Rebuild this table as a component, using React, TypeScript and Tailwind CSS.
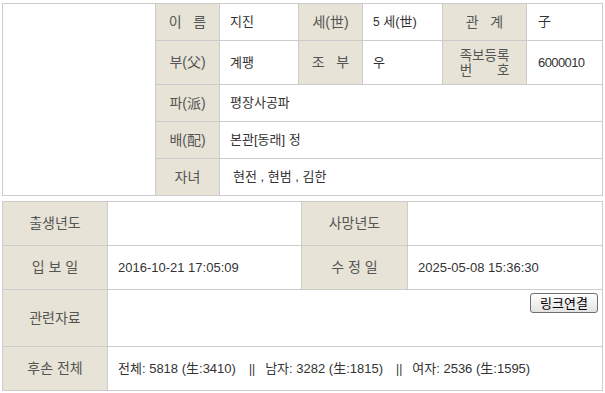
import React from 'react'

const font = 'font-["Liberation_Sans","Noto_Sans_CJK_KR",sans-serif]'

function Label({ children, className = '' }: { children: React.ReactNode; className?: string }) {
  return (
    <div
      className={`flex items-center justify-center whitespace-pre bg-[#e7e3d6] text-[14px] text-[#555] ${className}`}
    >
      {children}
    </div>
  )
}

function Value({ children, className = '' }: { children?: React.ReactNode; className?: string }) {
  return (
    <div className={`flex items-center whitespace-pre bg-white pl-[10px] text-[13px] text-[#333] ${className}`}>
      {children}
    </div>
  )
}

function Sep() {
  return <span className="mx-[10px] text-[12px]">||</span>
}

export default function App() {
  return (
    <div className={`h-[393px] w-[605px] overflow-hidden bg-white ${font}`}>
      {/* 인물 기본 정보 */}
      <div className="ml-[2px] mt-[3px] grid w-[601px] grid-cols-[152px_63px_78px_63px_79px_83px_75px] grid-rows-[36px_43px_36px_36px_36px] gap-px border border-[#cccccc] bg-[#cccccc]">
        <div className="row-span-5 bg-white" />

        <Label>{'이   름'}</Label>
        <Value>지진</Value>
        <Label>세(世)</Label>
        <Value>
          <span className="text-[12px]">5</span> 세(世)
        </Value>
        <Label>{'관   계'}</Label>
        <Value className="pl-[11px]">子</Value>

        <Label>부(父)</Label>
        <Value>계팽</Value>
        <Label>{'조   부'}</Label>
        <Value>우</Value>
        <Label>
          <div className="flex flex-col text-[13.5px] leading-[15px]">
            <span>족보등록</span>
            <span className="flex justify-between">
              <span>번</span>
              <span>호</span>
            </span>
          </div>
        </Label>
        <Value className="pl-[11px] text-[12px] tracking-[-0.6px]">6000010</Value>

        <Label>파(派)</Label>
        <Value className="col-span-5">평장사공파</Value>

        <Label>배(配)</Label>
        <Value className="col-span-5">본관[동래] 정</Value>

        <Label>자녀</Label>
        <Value className="col-span-5 pl-[13px]">현전 , 현범 , 김한</Value>
      </div>

      {/* 입보/수정 정보 */}
      <div className="ml-[2px] mt-[5px] grid w-[601px] grid-cols-[104px_193px_105px_194px] grid-rows-[43px_43px_56px_43px] gap-px border border-[#cccccc] bg-[#cccccc]">
        <Label>출생년도</Label>
        <Value />
        <Label>사망년도</Label>
        <Value />

        <Label>{'입 보 일'}</Label>
        <Value className="text-[12px]">2016-10-21 17:05:09</Value>
        <Label>{'수 정 일'}</Label>
        <Value className="text-[12px]">2025-05-08 15:36:30</Value>

        <Label>관련자료</Label>
        <div className="col-span-3 flex items-start justify-end bg-white pr-[4px] pt-[3px]">
          <button className="h-[20px] w-[68px] rounded-[3px] border border-[#707070] bg-gradient-to-b from-white to-[#e3e3e3] text-[13px] leading-none text-black">
            링크연결
          </button>
        </div>

        <Label>후손 전체</Label>
        <Value className="col-span-3 text-[12px]">
          <span>
            <span className="text-[13px]">전체</span>: 5818 (<span className="text-[13px]">生</span>:3410)
          </span>
          <span className="ml-[3px]" />
          <Sep />
          <span>
            <span className="text-[13px]">남자</span>: 3282 (<span className="text-[13px]">生</span>:1815)
          </span>
          <span className="ml-[3px]" />
          <Sep />
          <span>
            <span className="text-[13px]">여자</span>: 2536 (<span className="text-[13px]">生</span>:1595)
          </span>
        </Value>
      </div>
    </div>
  )
}
